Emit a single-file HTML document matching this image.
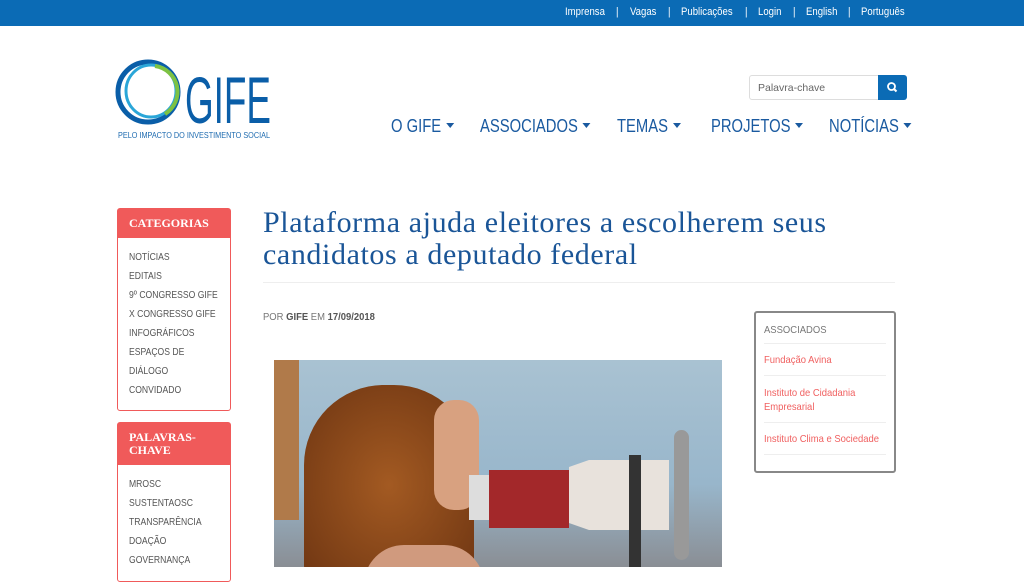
<!DOCTYPE html>
<html><head><meta charset="utf-8"><style>
*{margin:0;padding:0;box-sizing:border-box}
body{width:1024px;height:567px;overflow:hidden;background:#fff;font-family:"Liberation Sans",sans-serif;position:relative}
.top{position:absolute;left:0;top:0;width:1024px;height:26px;background:#0b6bb5;color:#fff;font-size:11px}
.top span{position:absolute;top:6px;transform:scaleX(0.87);transform-origin:0 0}
.nav{position:absolute;top:115px;font-size:18.5px;color:#1a5aa0;transform:scaleX(0.8);transform-origin:0 0;white-space:nowrap}
.nav i{display:inline-block;border-left:5px solid transparent;border-right:5px solid transparent;border-top:5px solid #1a5aa0;margin-left:6px;vertical-align:4px}
.box{position:absolute;left:117px;width:114px;border:1px solid #f05a5a;border-radius:3px;background:#fff}
.box h3{background:#f05a5a;color:#fff;font-family:"Liberation Serif",serif;font-size:12px;font-weight:bold;padding:8px 11px;line-height:13px}
.box p{font-size:10.5px;color:#555;margin-left:11px;line-height:19px;transform:scaleX(0.82);transform-origin:0 0;white-space:nowrap}
.sq{transform:scaleX(0.9);transform-origin:0 0;white-space:nowrap}
</style></head><body>
<div class="top">
<span style="left:565px">Imprensa</span><span style="left:616px">|</span>
<span style="left:630px">Vagas</span><span style="left:668px">|</span>
<span style="left:681px">Publicações</span><span style="left:745px">|</span>
<span style="left:758px">Login</span><span style="left:793px">|</span>
<span style="left:806px">English</span><span style="left:848px">|</span>
<span style="left:861px">Português</span>
</div>
<svg style="position:absolute;left:115px;top:58px" width="160" height="86">
<ellipse cx="33" cy="34" rx="30" ry="30" fill="none" stroke="#0a5ea8" stroke-width="5"/>
<ellipse cx="36" cy="33" rx="25" ry="26" fill="none" stroke="#2aa6d8" stroke-width="3"/>
<path d="M40 8 A26 26 0 0 1 50 56" fill="none" stroke="#7dc243" stroke-width="4"/>
<text x="70" y="65" font-family="Liberation Sans,sans-serif" font-size="66" fill="#0a5ea8" textLength="86" lengthAdjust="spacingAndGlyphs">GIFE</text>
<text x="3" y="80" font-size="8.5" fill="#1e6bb0" font-family="Liberation Sans,sans-serif" textLength="152" lengthAdjust="spacingAndGlyphs">PELO IMPACTO DO INVESTIMENTO SOCIAL</text>
</svg>
<div style="position:absolute;left:749px;top:75px;width:130px;height:25px;border:1px solid #ddd;border-radius:3px 0 0 3px;font-size:10.5px;color:#666;padding:6px 8px">Palavra-chave</div>
<div style="position:absolute;left:878px;top:75px;width:29px;height:25px;background:#0b6bb5;border-radius:0 3px 3px 0">
<svg width="29" height="25"><circle cx="13.5" cy="11.5" r="3.5" fill="none" stroke="#fff" stroke-width="1.8"/><line x1="16" y1="14" x2="18.5" y2="16.5" stroke="#fff" stroke-width="2"/></svg></div>
<div class="nav" style="left:391px">O GIFE<i></i></div>
<div class="nav" style="left:480px">ASSOCIADOS<i></i></div>
<div class="nav" style="left:617px">TEMAS<i></i></div>
<div class="nav" style="left:711px">PROJETOS<i></i></div>
<div class="nav" style="left:829px">NOTÍCIAS<i></i></div>
<div class="box" style="top:208px;height:203px"><h3>CATEGORIAS</h3><div style="padding-top:10px"><p>NOTÍCIAS</p><p>EDITAIS</p><p>9º CONGRESSO GIFE</p><p>X CONGRESSO GIFE</p><p>INFOGRÁFICOS</p><p>ESPAÇOS DE</p><p>DIÁLOGO</p><p>CONVIDADO</p></div></div>
<div class="box" style="top:422px;height:160px"><h3>PALAVRAS-<br>CHAVE</h3><div style="padding-top:10px"><p>MROSC</p><p>SUSTENTAOSC</p><p>TRANSPARÊNCIA</p><p>DOAÇÃO</p><p>GOVERNANÇA</p></div></div>
<div style="position:absolute;left:263px;top:207px;font-family:'Liberation Serif',serif;font-size:30px;line-height:32px;color:#1a5597;letter-spacing:0.6px">Plataforma ajuda eleitores a escolherem seus<br>candidatos a deputado federal</div>
<div style="position:absolute;left:263px;top:282px;width:632px;border-top:1px solid #eee"></div>
<div class="sq" style="position:absolute;left:263px;top:311px;font-size:10.5px;color:#777">POR <b style="color:#555">GIFE</b> EM <b style="color:#555">17/09/2018</b></div>
<div style="position:absolute;left:274px;top:360px;width:448px;height:207px;background:linear-gradient(180deg,#a9c2d2 0%,#98b6cb 60%,#8a8e94 100%);overflow:hidden">
<div style="position:absolute;left:-5px;top:0;width:30px;height:160px;background:#b07a4a"></div>
<div style="position:absolute;left:30px;top:25px;width:170px;height:200px;border-radius:80px 80px 20px 20px;background:radial-gradient(#a35a22,#6e3512)"></div>
<div style="position:absolute;left:160px;top:40px;width:45px;height:110px;border-radius:20px;background:#d8a180"></div>
<div style="position:absolute;left:90px;top:185px;width:120px;height:40px;border-radius:40px 40px 0 0;background:#d09a7e"></div>
<div style="position:absolute;left:195px;top:115px;width:20px;height:45px;background:#ddd"></div>
<div style="position:absolute;left:215px;top:110px;width:80px;height:58px;background:#a3282a"></div>
<div style="position:absolute;left:295px;top:100px;width:100px;height:70px;background:#e8e2dc;clip-path:polygon(0 10%,100% -40%,100% 140%,0 90%)"></div>
<div style="position:absolute;left:400px;top:70px;width:15px;height:130px;border-radius:8px;background:#999"></div>
<div style="position:absolute;left:355px;top:95px;width:12px;height:112px;background:#333"></div>
</div>
<div style="position:absolute;left:754px;top:311px;width:142px;height:162px;border:2px solid #888;border-radius:3px;padding:0 8px">
<div style="font-size:10.5px;color:#777;padding:11px 0 4px;border-bottom:1px solid #eee;height:31px"><div class="sq">ASSOCIADOS</div></div>
<div style="font-size:10.5px;color:#f06060;padding:10px 0;border-bottom:1px solid #eee;height:32px"><div class="sq">Fundação Avina</div></div>
<div style="font-size:10.5px;color:#f06060;padding:10px 0;border-bottom:1px solid #eee;line-height:14px;height:47px"><div class="sq">Instituto de Cidadania<br>Empresarial</div></div>
<div style="font-size:10.5px;color:#f06060;padding:10px 0;border-bottom:1px solid #eee;height:32px"><div class="sq">Instituto Clima e Sociedade</div></div>
</div>
</body></html>
